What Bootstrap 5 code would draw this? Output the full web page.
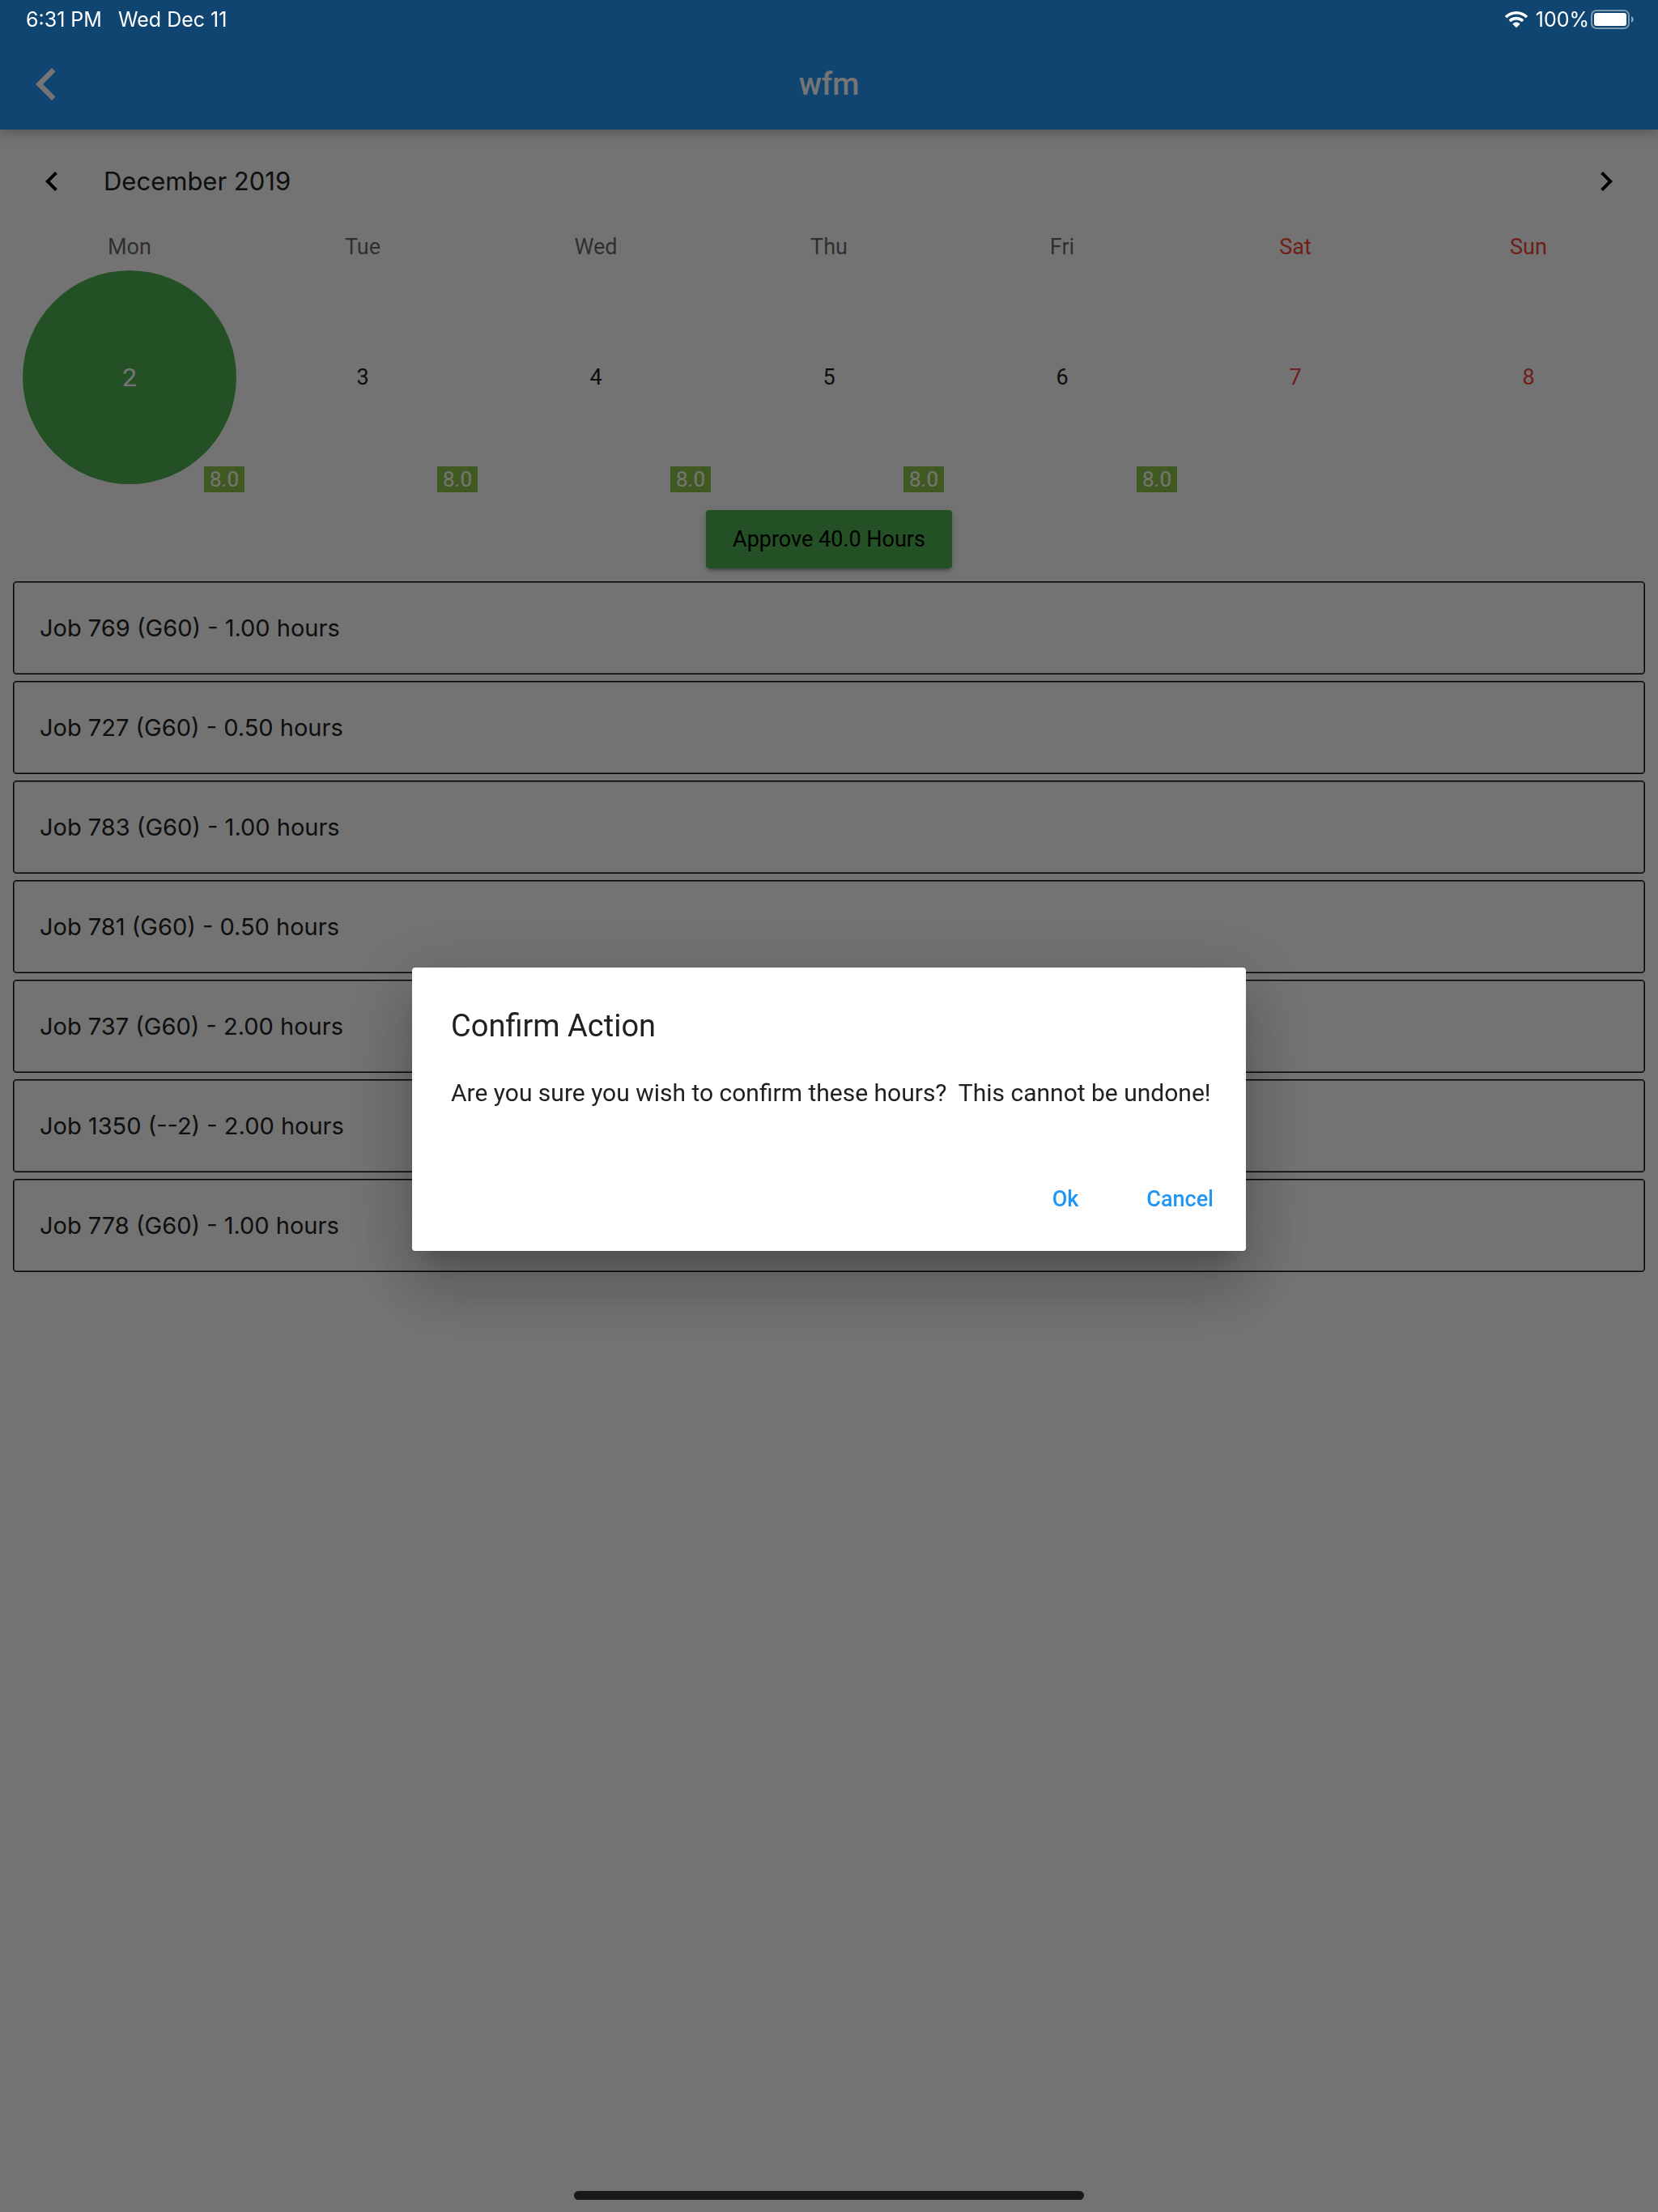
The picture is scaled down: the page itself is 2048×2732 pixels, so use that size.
<!DOCTYPE html>
<html lang="en">
<head>
<meta charset="utf-8">
<meta name="viewport" content="width=device-width, initial-scale=1">
<title>wfm</title>
<link href="https://cdn.jsdelivr.net/npm/bootstrap@5.3.0/dist/css/bootstrap.min.css" rel="stylesheet">
<style>
  :root { --ink: #212121; --primary: #2196f3; --go: #4caf50; --alert: #f44336; }
  body { background: #fafafa; color: var(--ink); font-family: Roboto, sans-serif; min-height: 100vh; overflow: hidden; }
  .btn { --bs-btn-border-width: 0; line-height: 36px; }

  .app-bar { background: var(--primary); padding-top: 48px; box-shadow: 0 4px 14px rgba(0,0,0,.25); }
  .app-bar-row { height: 112px; padding: 0 44px; display: grid; grid-template-columns: 1fr auto 1fr; align-items: center; }
  .app-title { font-size: 38px; line-height: 48px; font-weight: 500; color: #fff; margin: 0; }

  .status-bar { height: 48px; padding: 0 29px 0 32px; z-index: 1070; color: #fff; font: 400 25px/48px Inter, sans-serif; }
  .status-left { gap: 20px; }
  .status-right { gap: 2px; }

  .month-row { height: 128px; padding: 0 40px; gap: 40px; }
  .month-title { font: 400 31px/40px Inter, sans-serif; margin: 0; }
  .week { padding: 0 16px; }
  .weekday { font-size: 27px; line-height: 34px; color: rgba(0,0,0,.6); }
  .day-cell { aspect-ratio: 1; padding: 12px; }
  .day-btn { font-size: 27px; color: var(--ink); }
  .day-btn.selected { background: var(--go); color: #fff; font-size: 32px; }
  .weekend, .weekend .day-btn { color: var(--alert); }
  .hours-tag { right: 2px; bottom: 2px; width: 50px; background: #8bc34a; color: #fff; font-size: 26px; line-height: 32px; }
  .approve { margin: 20px 0 16px; padding: 18px 33px; border-radius: 4px; background: var(--go); color: #000; font-size: 27px;
    box-shadow: 0 6px 2px -4px rgba(0,0,0,.2), 0 4px 4px rgba(0,0,0,.14), 0 2px 10px rgba(0,0,0,.12); }

  .jobs { padding: 0 16px; gap: 8px; }
  .job { border: 1px solid #000; box-shadow: inset 0 0 0 1px rgba(0,0,0,.5); border-radius: 4px; padding: 38px 32px 37px; font: 400 29px/38px Inter, sans-serif; }

  .modal-backdrop { --bs-backdrop-opacity: .54; }
  .modal { padding: 48px 0 40px; overflow: hidden; }
  .modal-dialog { max-width: 1030px; min-height: 100%; margin: 0 auto; }
  .modal-content { border: 0; border-radius: 4px; color: var(--ink);
    box-shadow: 0 22px 30px -14px rgba(0,0,0,.2), 0 48px 76px 6px rgba(0,0,0,.14), 0 18px 92px 16px rgba(0,0,0,.12); }
  .dialog-text { padding: 48px 32px 48px 48px; }
  .dialog-title { font-size: 38px; line-height: 48px; font-weight: 400; margin: 0 0 40px; }
  .dialog-message { font-size: 30px; line-height: 38px; margin: 0; white-space: pre-wrap; }
  .dialog-actions { padding: 28px 16px; gap: 36px; }
  .dialog-actions .btn { padding: 18px 24px; font-size: 27px; font-weight: 500; color: var(--primary); }

  .home-bar { width: 630px; max-width: 60%; height: 11px; margin-bottom: 15px; z-index: 1070; background: #191919; border-radius: 6px; }
</style>
</head>
<body class="d-flex flex-column">

<div class="status-bar fixed-top d-flex justify-content-between">
  <div class="status-left d-flex"><span>6:31 PM</span><span>Wed Dec 11</span></div>
  <div class="status-right d-flex align-items-center">
    <svg class="me-2" width="28" height="20" viewBox="0 0 28 20" fill="#fff" aria-label="Wi-Fi" role="img">
      <path d="M14 0C8.600 0 3.700 2.100.200 5.500q-.400.400 0 .800l1.700 1.700q.400.400.800 0C5.700 5.200 9.600 3.600 14 3.600s8.300 1.600 11.300 4.400q.400.400.800 0l1.700-1.700q.400-.400 0-.800C24.300 2.100 19.400 0 14 0z"/>
      <path d="M14 6.800c-3.500 0-6.600 1.300-9 3.500q-.400.400 0 .8l1.800 1.800q.400.400.8 0c1.700-1.500 3.900-2.500 6.400-2.500s4.700 1 6.400 2.500q.400.400.8 0l1.800-1.800q.400-.4 0-.8c-2.400-2.200-5.500-3.500-9-3.500z"/>
      <path d="M14 13.500c-1.600 0-3.100.6-4.200 1.600q-.400.4 0 .8l3.700 3.800q.500.500 1 0l3.700-3.800q.400-.4 0-.8c-1.100-1-2.600-1.600-4.200-1.600z"/>
    </svg>
    <span>100%</span>
    <svg width="54" height="24" viewBox="0 0 54 24" aria-label="Battery full" role="img">
      <rect x="1" y="1" width="46" height="22" rx="6" fill="none" stroke="#fff" stroke-opacity=".45" stroke-width="2"/>
      <rect x="4" y="4" width="40" height="16" rx="3" fill="#fff"/>
      <path d="M50 8q3 1.500 3 4t-3 4z" fill="#fff" fill-opacity=".5"/>
    </svg>
  </div>
</div>

<header class="app-bar position-relative">
  <div class="app-bar-row">
    <button class="btn p-0 text-start d-flex" type="button" aria-label="Back">
      <svg width="25" height="40" viewBox="0 0 25 40" fill="#fff"><path d="M0 20 20 0l4.500 4.500L9 20l15.500 15.500L20 40z"/></svg>
    </button>
    <h1 class="app-title">wfm</h1>
  </div>
</header>

<main>
  <div class="month-row d-flex align-items-center">
    <button class="btn p-0 d-flex" type="button" aria-label="Previous week">
      <svg width="48" height="48" viewBox="0 0 24 24"><path d="M15.410 7.410 14 6l-6 6 6 6 1.410-1.410L10.830 12z"/></svg>
    </button>
    <h2 class="month-title flex-grow-1">December 2019</h2>
    <button class="btn p-0 d-flex" type="button" aria-label="Next week">
      <svg width="48" height="48" viewBox="0 0 24 24"><path d="M10 6 8.590 7.410 13.170 12l-4.580 4.590L10 18l6-6z"/></svg>
    </button>
  </div>

  <div class="week row row-cols-7 g-0 flex-nowrap text-center">
    <div class="col"><div class="weekday">Mon</div><div class="day-cell position-relative"><button type="button" class="day-btn selected btn rounded-circle w-100 h-100">2</button><span class="hours-tag position-absolute">8.0</span></div></div>
    <div class="col"><div class="weekday">Tue</div><div class="day-cell position-relative"><button type="button" class="day-btn btn rounded-circle w-100 h-100">3</button><span class="hours-tag position-absolute">8.0</span></div></div>
    <div class="col"><div class="weekday">Wed</div><div class="day-cell position-relative"><button type="button" class="day-btn btn rounded-circle w-100 h-100">4</button><span class="hours-tag position-absolute">8.0</span></div></div>
    <div class="col"><div class="weekday">Thu</div><div class="day-cell position-relative"><button type="button" class="day-btn btn rounded-circle w-100 h-100">5</button><span class="hours-tag position-absolute">8.0</span></div></div>
    <div class="col"><div class="weekday">Fri</div><div class="day-cell position-relative"><button type="button" class="day-btn btn rounded-circle w-100 h-100">6</button><span class="hours-tag position-absolute">8.0</span></div></div>
    <div class="col weekend"><div class="weekday weekend">Sat</div><div class="day-cell"><button type="button" class="day-btn btn rounded-circle w-100 h-100">7</button></div></div>
    <div class="col weekend"><div class="weekday weekend">Sun</div><div class="day-cell"><button type="button" class="day-btn btn rounded-circle w-100 h-100">8</button></div></div>
  </div>

  <div class="d-flex justify-content-center">
    <button type="button" class="approve btn">Approve 40.0 Hours</button>
  </div>

  <ul class="jobs list-unstyled d-flex flex-column mb-0">
    <li class="job">Job 769 (G60) - 1.00 hours</li>
    <li class="job">Job 727 (G60) - 0.50 hours</li>
    <li class="job">Job 783 (G60) - 1.00 hours</li>
    <li class="job">Job 781 (G60) - 0.50 hours</li>
    <li class="job">Job 737 (G60) - 2.00 hours</li>
    <li class="job">Job 1350 (--2) - 2.00 hours</li>
    <li class="job">Job 778 (G60) - 1.00 hours</li>
  </ul>
</main>

<div class="modal-backdrop show"></div>
<div class="modal d-block" role="dialog" aria-modal="true" aria-labelledby="confirmTitle">
  <div class="modal-dialog modal-dialog-centered">
    <div class="modal-content">
      <div class="dialog-text">
        <h2 class="dialog-title" id="confirmTitle">Confirm Action</h2>
        <p class="dialog-message">Are you sure you wish to confirm these hours?  This cannot be undone!</p>
      </div>
      <div class="dialog-actions d-flex justify-content-end">
        <button type="button" class="btn">Ok</button>
        <button type="button" class="btn">Cancel</button>
      </div>
    </div>
  </div>
</div>

<div class="home-bar fixed-bottom mx-auto"></div>

<script src="https://cdn.jsdelivr.net/npm/bootstrap@5.3.0/dist/js/bootstrap.bundle.min.js"></script>
</body>
</html>
